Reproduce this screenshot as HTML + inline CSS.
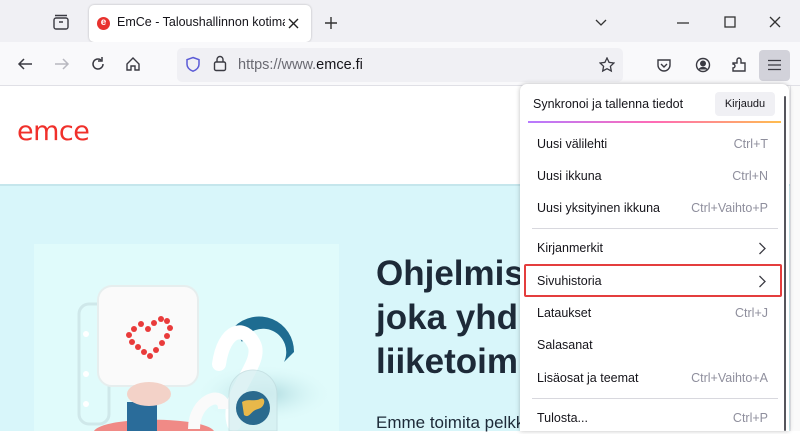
<!DOCTYPE html>
<html><head><meta charset="utf-8"><style>
*{margin:0;padding:0;box-sizing:border-box}
body{width:800px;height:431px;overflow:hidden;position:relative;background:#fff;font-family:"Liberation Sans",sans-serif;color:#15141a}
.abs{position:absolute}
#title{left:0;top:0;width:800px;height:42px;background:#f0f0f4}
#tab{left:89px;top:5px;width:222px;height:37px;background:#fff;border-radius:5px;box-shadow:0 0 2px rgba(0,0,0,.25)}
#nav{left:0;top:42px;width:800px;height:44px;background:#f9f9fb;border-bottom:1px solid #e0e0e6}
#url{left:177px;top:48px;width:446px;height:34px;background:#f0f0f4;border-radius:5px}
#hero{left:0;top:184px;width:790px;height:247px;background:#d8f6fa;border-top:2px solid #c5e6ec}
#menu{left:520px;top:84px;width:269px;height:347px;background:#fff;border-radius:7px 7px 0 0;box-shadow:0 0 5px rgba(0,0,0,.25)}
.mi{position:absolute;left:4px;width:258px;height:32px;font-size:12.5px;line-height:32px;padding-left:13px;color:#15141a}
.mi span{position:absolute;right:14px;top:0;color:#8f8f9d}
.mi svg{position:absolute;right:16px;top:10px}
.sep{position:absolute;left:12px;width:246px;height:1px;background:#d8d8de}
</style></head><body>
<div id="title" class="abs"></div>
<svg class="abs" style="left:52px;top:14px" width="18" height="16" viewBox="0 0 18 16" fill="none" stroke="#3a3a42" stroke-width="1.4"><rect x="2" y="4" width="14" height="11" rx="2"/><path d="M3 1.5h12M7 8h4"/></svg>
<div id="tab" class="abs"></div>
<div class="abs" style="left:97px;top:17px;width:13px;height:13px;border-radius:50%;background:#e8322e;color:#fff;font-size:10px;line-height:12px;text-align:center;font-weight:bold">e</div>
<div class="abs" style="left:117px;top:15px;font-size:12.5px;width:168px;overflow:hidden;white-space:nowrap;color:#15141a">EmCe - Taloushallinnon kotimai</div>
<svg class="abs" style="left:288px;top:18px" width="11" height="11" stroke="#222" stroke-width="1.4"><path d="M1 1l9 9M10 1L1 10"/></svg>
<svg class="abs" style="left:324px;top:16px" width="14" height="14" stroke="#333" stroke-width="1.4"><path d="M7 1v12M1 7h12"/></svg>
<svg class="abs" style="left:594px;top:18px" width="14" height="10" stroke="#333" stroke-width="1.3" fill="none"><path d="M2 2l5 5 5-5"/></svg>
<svg class="abs" style="left:676px;top:22px" width="14" height="2" stroke="#333" stroke-width="1.3"><path d="M1 1h12"/></svg>
<svg class="abs" style="left:724px;top:16px" width="12" height="12" stroke="#333" stroke-width="1.3" fill="none"><rect x="1" y="1" width="10" height="10"/></svg>
<svg class="abs" style="left:769px;top:16px" width="12" height="12" stroke="#333" stroke-width="1.3"><path d="M1 1l10 10M11 1L1 11"/></svg>
<div id="nav" class="abs"></div>
<svg class="abs" style="left:17px;top:57px" width="16" height="14" stroke="#3a3a42" stroke-width="1.5" fill="none"><path d="M15 7H2M7 2L2 7l5 5"/></svg>
<svg class="abs" style="left:54px;top:57px" width="16" height="14" stroke="#b8b8c0" stroke-width="1.5" fill="none"><path d="M1 7h13M9 2l5 5-5 5"/></svg>
<svg class="abs" style="left:90px;top:56px" width="16" height="16" stroke="#3a3a42" stroke-width="1.5" fill="none"><path d="M13 8a5 5 0 1 1-2-4"/><path d="M12 1v4H8"/></svg>
<svg class="abs" style="left:125px;top:56px" width="16" height="16" stroke="#3a3a42" stroke-width="1.4" fill="none"><path d="M2 8L8 2l6 6v6h-4v-4H6v4H2z"/></svg>
<div id="url" class="abs"></div>
<svg class="abs" style="left:185px;top:56px" width="16" height="17" stroke="#5b5bd6" stroke-width="1.5" fill="none"><path d="M8 1.5l6 2.2v4.5c0 3.5-3 5.8-6 7-3-1.2-6-3.5-6-7V3.7z"/></svg>
<svg class="abs" style="left:213px;top:55px" width="14" height="17" stroke="#3a3a42" stroke-width="1.4" fill="none"><rect x="1.5" y="7" width="11" height="8.5" rx="1.5"/><path d="M4 7V4.5a3 3 0 0 1 6 0V7"/></svg>
<div class="abs" style="left:238px;top:57px;font-size:14.5px;color:#6a6a72">https://www.<span style="color:#15141a">emce.fi</span></div>
<svg class="abs" style="left:599px;top:57px" width="16" height="16" stroke="#3a3a42" stroke-width="1.3" fill="none"><path d="M8 1l2.1 4.4 4.8.6-3.5 3.3.9 4.7L8 11.7 3.7 14l.9-4.7L1.1 6l4.8-.6z"/></svg>
<svg class="abs" style="left:656px;top:58px" width="16" height="15" stroke="#3a3a42" stroke-width="1.4" fill="none"><path d="M2 2h12v5a6 6 0 0 1-12 0z"/><path d="M5 6l3 3 3-3"/></svg>
<svg class="abs" style="left:695px;top:57px" width="16" height="16" stroke="#3a3a42" stroke-width="1.4" fill="none"><circle cx="8" cy="8" r="6.5"/><circle cx="8" cy="6.5" r="2.3" fill="#3a3a42"/><path d="M4 12.5c2-2.5 6-2.5 8 0" fill="#3a3a42"/></svg>
<svg class="abs" style="left:731px;top:57px" width="16" height="16" stroke="#3a3a42" stroke-width="1.4" fill="none"><path d="M2 6h4V3a2 2 0 0 1 4 0v3h4v8H2v-3a2 2 0 0 0 0-4z"/></svg>
<div class="abs" style="left:759px;top:50px;width:31px;height:31px;background:#d2d2da;border-radius:4px"></div>
<svg class="abs" style="left:767px;top:59px" width="15" height="12" stroke="#3a3a42" stroke-width="1.3"><path d="M1 1.5h13M1 6h13M1 10.5h13"/></svg>
<div class="abs" style="left:17px;top:116px;font-size:27px;color:#f0302b;letter-spacing:-0.5px;font-family:'DejaVu Sans','Liberation Sans',sans-serif;font-weight:normal">emce</div>
<div id="hero" class="abs"></div>
<div class="abs" style="left:34px;top:244px;width:305px;height:187px;background:#e0fbfb"></div>
<svg class="abs" style="left:34px;top:244px" width="305" height="187">
<defs><radialGradient id="sh" cx="0.5" cy="0.5" r="0.5"><stop offset="0" stop-color="#a9d7dc"/><stop offset="1" stop-color="#e0fbfb" stop-opacity="0"/></radialGradient></defs>
<ellipse cx="230" cy="150" rx="70" ry="30" fill="url(#sh)"/>
<rect x="45" y="60" width="30" height="120" rx="10" fill="none" stroke="#cfe8ea" stroke-width="3"/>
<circle cx="52" cy="90" r="3" fill="#fff"/><circle cx="52" cy="130" r="3" fill="#fff"/><circle cx="52" cy="160" r="3" fill="#fff"/>
<path d="M60 187c10-15 110-15 120 0z" fill="#f08a86"/>
<rect x="93" y="158" width="30" height="29" fill="#2a6c9a"/>
<rect x="64" y="42" width="100" height="100" rx="14" fill="#fafafa" stroke="#e6eeee" stroke-width="2"/>
<ellipse cx="115" cy="150" rx="22" ry="12" fill="#f3d2c8"/>
<g fill="#e93b3b">
<circle cx="100" cy="85" r="3"/><circle cx="107" cy="80" r="3"/><circle cx="114" cy="85" r="3"/><circle cx="120" cy="79" r="3"/><circle cx="127" cy="75" r="3"/><circle cx="133" cy="77" r="3"/><circle cx="136" cy="84" r="3"/><circle cx="133" cy="92" r="3"/><circle cx="128" cy="99" r="3"/><circle cx="122" cy="106" r="3"/><circle cx="116" cy="112" r="3"/><circle cx="110" cy="108" r="3"/><circle cx="104" cy="103" r="3"/><circle cx="98" cy="98" r="3"/><circle cx="95" cy="91" r="3"/>
</g>
<path d="M200 83a35 35 0 0 1 60 25l-10 10a22 22 0 0 0-42-20z" fill="#1e6c91"/>
<path d="M185 120c5-35 25-40 35-20s-30 50-20 80" fill="none" stroke="#ffffff" stroke-width="14" stroke-linecap="round"/>
<path d="M160 185c0-30 30-40 30-20" fill="none" stroke="#fafafa" stroke-width="12"/>
<path d="M195 150a24 24 0 0 1 48 0v37h-48z" fill="#d6f0f2" opacity=".8" stroke="#c2dde0"/>
<circle cx="219" cy="164" r="17" fill="#2a6a8e"/>
<path d="M208 158c6-4 12 0 18-3s6 8-2 10-8 10-14 6z" fill="#e8b84a"/>
</svg>
<div class="abs" style="left:376px;top:252px;font-size:35px;line-height:44px;font-weight:bold;color:#1d2a38;white-space:nowrap">Ohjelmisto<br>joka yhdistää<br>liiketoimin</div>
<div class="abs" style="left:376px;top:413px;font-size:17px;color:#1d2a38;white-space:nowrap">Emme toimita pelkkää</div>
<div class="abs" style="left:790px;top:86px;width:10px;height:345px;background:#fafafa;border-left:1px solid #e6e6ea"></div>
<div id="menu" class="abs">
<div class="abs" style="left:13px;top:13px;font-size:12.5px">Synkronoi ja tallenna tiedot</div>
<div class="abs" style="left:195px;top:8px;width:60px;height:24px;background:#f0f0f4;border-radius:4px;font-size:11px;line-height:24px;text-align:center">Kirjaudu</div>
<div class="abs" style="left:8px;top:37px;width:253px;height:1.5px;background:linear-gradient(90deg,#b67aff,#ff6bb5,#ffbd4f)"></div>
<div class="mi" style="top:44px">Uusi välilehti<span>Ctrl+T</span></div>
<div class="mi" style="top:76px">Uusi ikkuna<span>Ctrl+N</span></div>
<div class="mi" style="top:108px">Uusi yksityinen ikkuna<span>Ctrl+Vaihto+P</span></div>
<div class="sep" style="top:144px"></div>
<div class="mi" style="top:148px">Kirjanmerkit<svg width="8" height="13" stroke="#3a3a42" stroke-width="1.3" fill="none"><path d="M1.5 1l5.5 5.5L1.5 12"/></svg></div>
<div class="mi" style="top:181px">Sivuhistoria<svg width="8" height="13" stroke="#3a3a42" stroke-width="1.3" fill="none"><path d="M1.5 1l5.5 5.5L1.5 12"/></svg></div>
<div class="abs" style="left:4px;top:180px;width:258px;height:33px;border:2px solid #e43d3d;border-radius:2px"></div>
<div class="mi" style="top:213px">Lataukset<span>Ctrl+J</span></div>
<div class="mi" style="top:245px">Salasanat</div>
<div class="mi" style="top:278px">Lisäosat ja teemat<span>Ctrl+Vaihto+A</span></div>
<div class="sep" style="top:314px"></div>
<div class="mi" style="top:318px">Tulosta...<span>Ctrl+P</span></div>
<div class="abs" style="left:264px;top:12px;width:2px;height:335px;background:#55555c;border-radius:1px"></div>
</div>
</body></html>
